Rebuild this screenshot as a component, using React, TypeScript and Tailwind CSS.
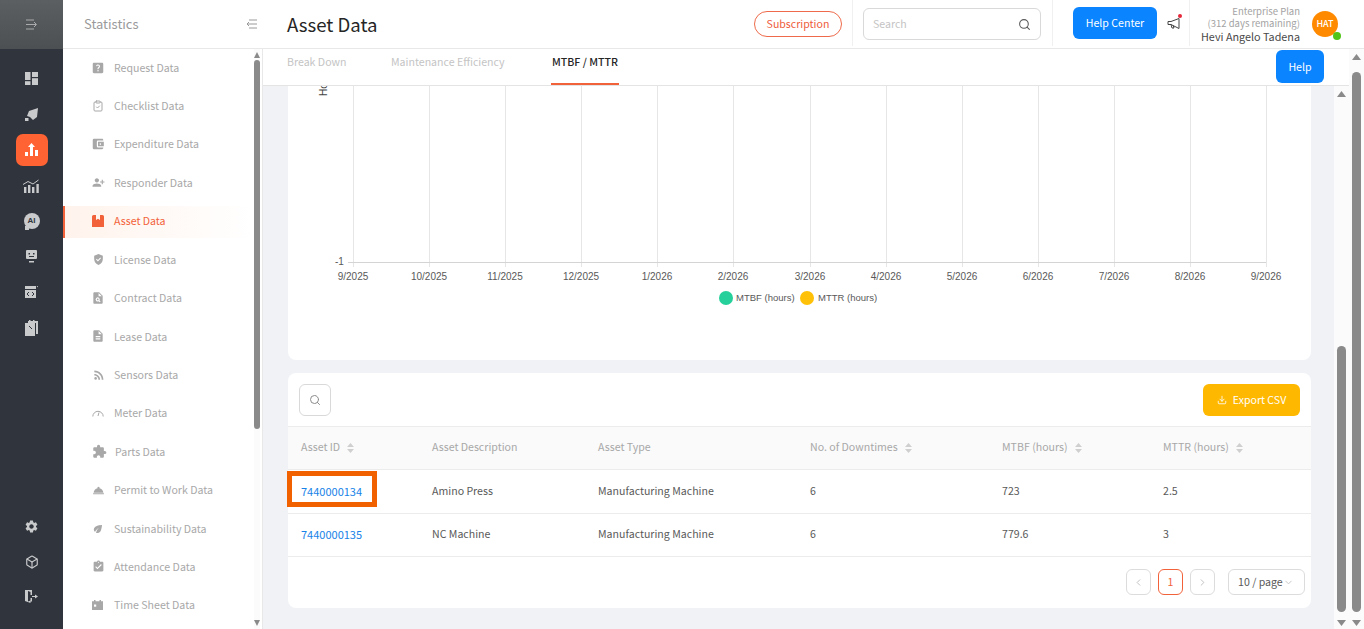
import type { ReactNode } from "react";
import {
  MdHelpCenter,
  MdAccountBalanceWallet,
  MdPersonAdd,
  MdGppGood,
  MdPlagiarism,
  MdDescription,
  MdRssFeed,
  MdExtension,
  MdRoomService,
  MdEco,
  MdAssignmentTurnedIn,
  MdSettings,
} from "react-icons/md";
import { LuBox, LuClipboardCheck, LuSearch, LuChevronLeft, LuChevronRight, LuChevronDown, LuDownload } from "react-icons/lu";

const AssetIcon = (
  <svg width="12" height="12" viewBox="0 0 12 12" fill="currentColor">
    <path d="M0 1.5A1.5 1.5 0 0 1 1.5 0H4v5l2-1.2L8 5V0h2.5A1.5 1.5 0 0 1 12 1.5V12H0z" />
  </svg>
);

const MeterIcon = (
  <svg width="12" height="8" viewBox="0 0 12 8" fill="none" stroke="currentColor" strokeWidth="1">
    <path d="M.8 7.5a5.2 5.2 0 0 1 10.4 0M6 7 7 3.5" />
  </svg>
);

const TimeSheetIcon = (
  <svg width="11" height="10" viewBox="0 0 11 10" fill="currentColor">
    <path d="M2 0h1.5v1.2h4V0H9v1.2h2V10H0V1.2h2z" />
    <rect x="2" y="4.5" width="2.2" height="2.2" fill="#fff" />
  </svg>
);

const sideItems: { label: string; icon: ReactNode; active?: boolean; gap?: boolean }[] = [
  { label: "Request Data", icon: <MdHelpCenter size={14} className="-ml-[1px]" /> },
  { label: "Checklist Data", icon: <LuClipboardCheck size={12} /> },
  { label: "Expenditure Data", icon: <MdAccountBalanceWallet size={14} className="-ml-[1px]" /> },
  { label: "Responder Data", icon: <MdPersonAdd size={13} className="-scale-x-100" /> },
  { label: "Asset Data", icon: AssetIcon, active: true },
  { label: "License Data", icon: <MdGppGood size={13} /> },
  { label: "Contract Data", icon: <MdPlagiarism size={14} className="-ml-[1px]" /> },
  { label: "Lease Data", icon: <MdDescription size={14} className="-ml-[1px]" /> },
  { label: "Sensors Data", icon: <MdRssFeed size={14} /> },
  { label: "Meter Data", icon: MeterIcon },
  { label: "Parts Data", icon: <MdExtension size={15} />, gap: true },
  { label: "Permit to Work Data", icon: <MdRoomService size={13} /> },
  { label: "Sustainability Data", icon: <MdEco size={12} /> },
  { label: "Attendance Data", icon: <MdAssignmentTurnedIn size={13} /> },
  { label: "Time Sheet Data", icon: TimeSheetIcon },
];

const months = ["9/2025", "10/2025", "11/2025", "12/2025", "1/2026", "2/2026", "3/2026", "4/2026", "5/2026", "6/2026", "7/2026", "8/2026", "9/2026"];
const gridX = [65, 141, 217, 293, 369, 445, 522, 598, 674, 750, 826, 902, 978];

const rows = [
  { id: "7440000134", desc: "Amino Press", type: "Manufacturing Machine", down: "6", mtbf: "723", mttr: "2.5" },
  { id: "7440000135", desc: "NC Machine", type: "Manufacturing Machine", down: "6", mtbf: "779.6", mttr: "3" },
];

function Scrollbar({
  top,
  height,
  cap = 15,
  arrow = 9,
  width = "w-[15px]",
  thumb = "w-[9px]",
}: {
  top: number;
  height: number;
  cap?: number;
  arrow?: number;
  width?: string;
  thumb?: string;
}) {
  return (
    <div className={`${width} shrink-0 h-full flex flex-col items-center bg-[#fbfbfb]`}>
      <div className="shrink-0 flex items-center justify-center" style={{ height: cap }}>
        <svg width={arrow} height="6" viewBox="0 0 9 6" preserveAspectRatio="none"><path d="M4.5 0 9 6H0z" fill="#8a8a8a" /></svg>
      </div>
      <div className="flex-1 w-full flex flex-col items-center">
        <div style={{ height: top }} />
        <div className={`${thumb} rounded-full bg-[#8a8a8a]`} style={{ height }} />
      </div>
      <div className="h-[13px] shrink-0 flex items-center justify-center">
        <svg width={arrow} height="6" viewBox="0 0 9 6" preserveAspectRatio="none"><path d="M0 0h9L4.5 6z" fill="#8a8a8a" /></svg>
      </div>
    </div>
  );
}

function SortArrows() {
  return (
    <svg width="7" height="10" viewBox="0 0 7 10" className="ml-[7px] mt-[3px]">
      <path d="M3.5 0 7 4H0z" fill="#cfcfcf" />
      <path d="M0 6h7L3.5 10z" fill="#cfcfcf" />
    </svg>
  );
}

function RailSlot({ children }: { children: ReactNode }) {
  return <div className="h-[35.6px] shrink-0 flex items-center justify-center">{children}</div>;
}

function RailIcons() {
  return (
    <div className="flex-1 flex flex-col items-center pt-[12px] text-[#c9cacc]">
      <RailSlot>
        <svg width="13" height="13" viewBox="0 0 13 13" fill="currentColor">
          <rect width="5.5" height="8" />
          <rect x="7" width="6" height="5" />
          <rect y="9.2" width="5.5" height="3.8" />
          <rect x="7" y="6.2" width="6" height="6.8" />
        </svg>
      </RailSlot>
      <RailSlot>
        <svg width="13" height="13" viewBox="0 0 13 13" fill="currentColor">
          <path d="M13 0 12 9 8 12 5 9 2 8 4 3zM0 10h3.5v3H0z" />
        </svg>
      </RailSlot>
      <RailSlot>
        <div className="w-[32px] h-[32px] rounded-[7px] bg-[#ff6333] flex items-center justify-center">
          <svg width="13" height="13" viewBox="0 0 13 13" fill="#fff">
            <path d="M6.5 0 10 4H8v9H5V4H3zM0 9h3v4H0zM10 7h3v6h-3z" />
          </svg>
        </div>
      </RailSlot>
      <RailSlot>
        <svg width="17" height="14" viewBox="0 0 17 14" fill="currentColor">
          <path d="M1 8h2.400v6H1zM5 6h2.400v8H5zM9 8h2.400v6H9zM13.400 5h2.400v9h-2.400z" />
          <path d="M0 5.500 5 2.500 10 5 15.500 1" fill="none" stroke="currentColor" strokeWidth="1" />
        </svg>
      </RailSlot>
      <RailSlot>
        <div className="relative w-[16px] h-[16px] rounded-full bg-[#c9cacc] flex items-center justify-center text-[8px] leading-none font-bold text-[#30343c] font-['Liberation_Sans',sans-serif]">
          AI
          <span className="absolute left-[1px] bottom-[-1px] w-[4px] h-[4px] bg-[#c9cacc]" />
        </div>
      </RailSlot>
      <RailSlot>
        <svg width="11" height="14" viewBox="0 0 11 14" fill="currentColor">
          <path d="M1 0h9a1 1 0 0 1 1 1v7a1 1 0 0 1-1 1H1a1 1 0 0 1-1-1V1a1 1 0 0 1 1-1z" />
          <path d="M3 11h5v1.500H3z" />
          <path d="M2.500 3h1.500v1.500H2.500zM7 3h1.500v1.500H7zM3 6h5v1H3z" fill="#30343c" />
        </svg>
      </RailSlot>
      <RailSlot>
        <svg width="13" height="12" viewBox="0 0 13 12" fill="currentColor">
          <path d="M0 0h11v3H0zM0 4h11v8H0z" />
          <path d="M4 6 2 8l2 2M7 6l2 2-2 2" fill="none" stroke="#30343c" strokeWidth="1" />
          <circle cx="12.400" cy=".6" r=".6" />
        </svg>
      </RailSlot>
      <RailSlot>
        <svg width="13" height="16" viewBox="0 0 13 16" fill="currentColor">
          <path d="M3 1h10v13h-2V3H3z" />
          <path d="M0 3h10v13H0z" />
          <path d="M4 0h1.500v3H4zM8 0h1.500v3H8z" />
          <path d="M4 6l3 3" stroke="#30343c" fill="none" />
        </svg>
      </RailSlot>
      <div className="mt-auto pb-[15px] flex flex-col items-center">
        <div className="h-[35px] flex items-center"><MdSettings size={15} /></div>
        <div className="h-[35px] flex items-center"><LuBox size={14} /></div>
        <div className="h-[35px] flex items-center">
          <svg width="13" height="14" viewBox="0 0 13 14" fill="currentColor">
            <path d="M0 0h7v5H5.500V2L3 1v10.500l2.500-1V8H7v3.500H5.500V13L0 11z" />
            <path d="M7 6.500h3.500" stroke="currentColor" fill="none" />
            <path d="M10 4.500 13 6.500 10 8.500z" />
          </svg>
        </div>
      </div>
    </div>
  );
}

export default function App() {
  return (
    <div className="flex h-screen w-[1364px] overflow-hidden bg-white font-['Noto_Sans_CJK_KR','Noto_Sans',sans-serif] text-[10.6px] text-[#595959]">
      {/* left rail */}
      <div className="w-[63px] shrink-0 flex flex-col bg-[#30343c]">
        <div className="h-[49px] shrink-0 bg-gradient-to-b from-[#5c5f61] to-[#4d5053] flex items-center justify-center">
          <svg width="12" height="11" viewBox="0 0 12 11" fill="none" stroke="#a9abac" strokeWidth="1">
            <path d="M0 1h8M0 5.500h10M0 10h8M8 3l2.500 2.500L8 8" />
          </svg>
        </div>
        <RailIcons />
      </div>

      <div className="flex-1 flex flex-col min-w-0">
        {/* header */}
        <div className="h-[49px] shrink-0 flex items-center pb-[2px] border-b border-[#e8e8e8]">
          <div className="w-[199px] shrink-0 mt-[2px] pl-[21px] pr-[4px] flex items-center justify-between text-[13px] text-[#9a9a9a]">
            Statistics
            <svg width="11" height="10" viewBox="0 0 11 10" fill="none" stroke="#9a9a9a" strokeWidth="1" className="mr-[1px]">
              <path d="M3 1h8M1 5h10M3 9h8M3 3 1 5l2 2" />
            </svg>
          </div>
          <h1 className="ml-[25px] mt-[2px] text-[18.6px] leading-none text-[#262626] w-[467px] shrink-0">Asset Data</h1>
          <button className="w-[88px] h-[26px] mt-[2px] shrink-0 rounded-full border border-[#ee6a4a] text-[#ee5a3a]">Subscription</button>
          <div className="h-full ml-[10px] border-r border-[#f0f0f0]" />
          <div className="ml-[10px] mt-[2px] w-[178px] h-[32px] shrink-0 border border-[#d9d9d9] rounded-[6px] flex items-center justify-between px-[9px] text-[#c4c4c4]">
            Search
            <LuSearch size={13} className="text-[#595959]" />
          </div>
          <div className="h-full ml-[11px] border-r border-[#f0f0f0]" />
          <button className="ml-[20px] w-[84px] h-[32px] shrink-0 rounded-[6px] bg-[#0a84ff] text-white">Help Center</button>
          <div className="relative ml-[10px] w-[14px] h-[14px]">
            <svg width="14" height="14" viewBox="0 0 14 14" fill="none" stroke="#444" strokeWidth="1">
              <path d="M1 5.500v3h3l8 4v-10l-8 3zM4 8.500l1 3.500h2l-.8-2.500" />
            </svg>
            <span className="absolute -top-[2px] -right-[1px] w-[4px] h-[4px] rounded-full bg-[#e5283a]" />
          </div>
          <div className="h-full ml-[8px] border-r border-[#f0f0f0]" />
          <div className="ml-[10px] mt-[2px] w-[100px] shrink-0 text-right flex flex-col whitespace-nowrap">
            <span className="text-[9.5px] leading-[12px] text-[#a3a3a3]">Enterprise Plan</span>
            <span className="text-[9.5px] leading-[12px] text-[#a3a3a3]">(312 days remaining)</span>
            <span className="text-[10.8px] leading-[14px] text-[#4a4a4a]">Hevi Angelo Tadena</span>
          </div>
          <div className="relative ml-[12px] mt-[2px] w-[26px] h-[26px] shrink-0 rounded-full bg-[#ff8a00] text-white text-[9px] font-medium flex items-center justify-center">
            HAT
            <span className="absolute right-[-3px] bottom-[-3px] w-[8px] h-[8px] rounded-full bg-[#52c41a]" />
          </div>
        </div>

        <div className="flex-1 flex min-h-0">
          {/* secondary sidebar */}
          <div className="w-[200px] shrink-0 flex border-r border-[#e8e8e8] overflow-hidden">
            <div className="w-[191px] shrink-0 overflow-hidden pt-[3px] flex flex-col gap-[6.43px]">
              {sideItems.map((item) => (
                <div
                  key={item.label}
                  className={`h-[32px] shrink-0 flex items-center pb-[1px] ${
                    item.active
                      ? "border-l-2 border-[#f2623a] pl-[27px] bg-gradient-to-r from-[#fff3ec] to-white text-[#f2623a]"
                      : "pl-[29px] text-[#a8a8a8]"
                  }`}
                >
                  <span className={`w-[22px] shrink-0 flex ${item.active ? "text-[#f2623a]" : "text-[#a8a8a8]"}`}>{item.icon}</span>
                  <span className={item.gap ? "ml-[1px]" : ""}>{item.label}</span>
                </div>
              ))}
            </div>
            <Scrollbar top={0} height={369} cap={11} arrow={6} width="w-[6px]" thumb="w-[6px]" />
          </div>

          {/* main */}
          <div className="relative flex-1 flex min-w-0 bg-[#f0f2f5]">
            <div className="flex-1 flex flex-col min-w-0">
              <div className="h-[37px] shrink-0 bg-white border-b border-[#e4e4e4] flex pl-[24px] text-[#c4c4c4]">
                <span className="w-[104px] pt-[5px]">Break Down</span>
                <span className="w-[160px] pt-[5px]">Maintenance Efficiency</span>
                <span className="h-full pt-[5px] px-[1px] font-medium text-[#262626] border-b-2 border-[#f2623a]">MTBF / MTTR</span>
              </div>
              <div className="flex-1 flex min-h-0">
                <div className="flex-1 pl-[25px] pr-[24px] overflow-hidden">
                  {/* chart card */}
                  <div className="w-[1023px] h-[274px] bg-white rounded-b-[8px]">
                    <svg width="1023" height="232" viewBox="0 0 1023 232" fontFamily="Liberation Sans, Arial, sans-serif" fontSize="10" fill="#595959">
                      {gridX.map((x) => (
                        <line key={x} x1={x + 0.5} x2={x + 0.5} y1="0" y2="181" stroke="#e6e6e6" />
                      ))}
                      <line x1="60" x2="978" y1="176.5" y2="176.5" stroke="#d4d4d4" />
                      {months.map((m, i) => (
                        <text key={m + i} x={gridX[i]} y="194" textAnchor="middle">{m}</text>
                      ))}
                      <text x="47" y="179">-1</text>
                      <text transform="translate(39 10) rotate(-90)" textAnchor="start" fontSize="10" fill="#444">Ho</text>
                      <circle cx="438" cy="212" r="7" fill="#26d09b" />
                      <text x="448" y="215" fontSize="9.5">MTBF (hours)</text>
                      <circle cx="519" cy="212" r="7" fill="#ffc107" />
                      <text x="530" y="215" fontSize="9.5">MTTR (hours)</text>
                    </svg>
                  </div>

                  {/* table card */}
                  <div className="relative w-[1023px] h-[235px] mt-[13px] bg-white rounded-[8px]">
                    <div className="h-[53px] flex items-center justify-between px-[11px]">
                      <button className="w-[32px] h-[32px] rounded-[6px] border border-[#d9d9d9] flex items-center justify-center text-[#8c8c8c]">
                        <LuSearch size={12} />
                      </button>
                      <button className="w-[97px] h-[32px] rounded-[6px] bg-[#ffb800] text-white flex items-center justify-center gap-[6px]">
                        <LuDownload size={10} />
                        Export CSV
                      </button>
                    </div>
                    <div className="grid grid-cols-[131px_166px_212px_192px_161px_161px] h-[44px] items-center pb-[3px] bg-[#fafafa] border-y border-[#ececec] text-[#a8a8a8]">
                      <div className="pl-[13px] flex items-center">Asset ID<SortArrows /></div>
                      <div className="pl-[13px]">Asset Description</div>
                      <div className="pl-[13px]">Asset Type</div>
                      <div className="pl-[13px] flex items-center">No. of Downtimes<SortArrows /></div>
                      <div className="pl-[13px] flex items-center">MTBF (hours)<SortArrows /></div>
                      <div className="pl-[13px] flex items-center">MTTR (hours)<SortArrows /></div>
                    </div>
                    {rows.map((row) => (
                      <div key={row.id} className="grid grid-cols-[131px_166px_212px_192px_161px_161px] h-[43.5px] items-center pb-[1px] border-b border-[#ececec]">
                        <div className="pl-[13px] text-[11px] text-[#1783e8]">{row.id}</div>
                        <div className="pl-[13px]">{row.desc}</div>
                        <div className="pl-[13px]">{row.type}</div>
                        <div className="pl-[13px]">{row.down}</div>
                        <div className="pl-[13px]">{row.mtbf}</div>
                        <div className="pl-[13px]">{row.mttr}</div>
                      </div>
                    ))}
                    <div className="flex justify-end items-center pr-[6px] pt-[12px]">
                      <button className="w-[25px] h-[26px] rounded-[6px] border border-[#dcdcdc] flex items-center justify-center text-[#bdbdbd]">
                        <LuChevronLeft size={11} />
                      </button>
                      <button className="w-[25px] h-[26px] ml-[7px] rounded-[6px] border border-[#f2623a] text-[#f2623a] flex items-center justify-center">1</button>
                      <button className="w-[25px] h-[26px] ml-[7px] rounded-[6px] border border-[#dcdcdc] flex items-center justify-center text-[#bdbdbd]">
                        <LuChevronRight size={11} />
                      </button>
                      <div className="w-[77px] h-[26px] ml-[13px] rounded-[6px] border border-[#dcdcdc] flex items-center pl-[9px] text-[#595959]">
                        10 / page
                        <LuChevronDown size={11} className="text-[#c4c4c4]" />
                      </div>
                    </div>
                    {/* highlight annotation */}
                    <div className="absolute left-[-1px] top-[98px] w-[90px] h-[36px] border-[5px] border-[#f26100]" />
                  </div>
                </div>
                <Scrollbar top={245} height={266} />
              </div>
            </div>
            <Scrollbar top={8} height={540} />
            <button className="absolute left-[1013px] top-[1px] w-[48px] h-[33px] rounded-[6px] bg-[#0a84ff] text-white">Help</button>
          </div>
        </div>
      </div>
    </div>
  );
}
